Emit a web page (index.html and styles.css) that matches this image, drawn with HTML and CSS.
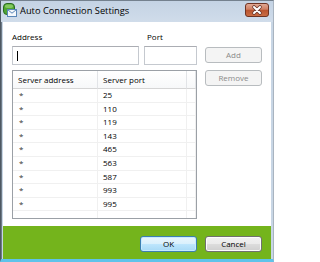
FILE: index.html
```html
<!DOCTYPE html>
<html>
<head>
<meta charset="utf-8">
<link rel="stylesheet" href="styles.css">
</head>
<body>
<div class="window">
  <div class="titlebar">
    <svg class="app-icon" viewBox="0 0 14 14" width="14" height="14">
      <rect x="0.5" y="0.5" width="11" height="11" rx="3.5" fill="#4fa532" stroke="#2b6a22"/>
      <rect x="2" y="1.5" width="8" height="3.5" rx="1.75" fill="#9ad872" opacity="0.7"/>
      <rect x="4.5" y="6.5" width="9" height="7" fill="#f4f8fc" stroke="#5a86b7"/>
      <path d="M4.5 6.5 L9 10.2 L13.5 6.5" fill="none" stroke="#5a86b7"/>
    </svg>
    <span class="title">Auto Connection Settings</span>
    <div class="close">
      <svg viewBox="0 0 24 14" width="24" height="14">
        <defs>
          <linearGradient id="cg" x1="0" y1="0" x2="0" y2="1">
            <stop offset="0" stop-color="#e2ac98"/>
            <stop offset="0.45" stop-color="#cf7f63"/>
            <stop offset="0.5" stop-color="#b9532f"/>
            <stop offset="1" stop-color="#cc6f45"/>
          </linearGradient>
        </defs>
        <rect x="0.5" y="0.5" width="23" height="13" rx="2.5" fill="url(#cg)" stroke="#6e3424"/>
        <path d="M9 4 L15 10 M15 4 L9 10" stroke="#6b3a30" stroke-width="3.6" stroke-linecap="round"/>
        <path d="M9 4 L15 10 M15 4 L9 10" stroke="#ffffff" stroke-width="2" stroke-linecap="round"/>
      </svg>
    </div>
  </div>
  <div class="client">
    <div class="content">
      <div class="lbl">Address</div>
      <div class="lbl port-lbl">Port</div>
      <div></div>
      <div class="input"><span class="caret"></span></div>
      <div class="input"></div>
      <button class="btn add" disabled>Add</button>
      <div class="list">
        <div class="hd">Server address</div><div class="hd">Server port</div><div class="hd"></div>
        <div class="c ast">*</div><div class="c">25</div><div class="c"></div>
        <div class="c ast">*</div><div class="c">110</div><div class="c"></div>
        <div class="c ast">*</div><div class="c">119</div><div class="c"></div>
        <div class="c ast">*</div><div class="c">143</div><div class="c"></div>
        <div class="c ast">*</div><div class="c">465</div><div class="c"></div>
        <div class="c ast">*</div><div class="c">563</div><div class="c"></div>
        <div class="c ast">*</div><div class="c">587</div><div class="c"></div>
        <div class="c ast">*</div><div class="c">993</div><div class="c"></div>
        <div class="c ast">*</div><div class="c">995</div><div class="c"></div>
        <div class="f"></div><div class="f"></div><div class="f"></div>
      </div>
      <button class="btn remove" disabled>Remove</button>
    </div>
    <div class="footer">
      <button class="btn default">OK</button>
      <button class="btn normal">Cancel</button>
    </div>
  </div>
</div>
</body>
</html>
```
FILE: styles.css
```css
html, body {
  margin: 0;
  padding: 0;
}
body {
  width: 274px;
  height: 262px;
  overflow: hidden;
  font-family: "Open Sans", "Noto Sans", sans-serif;
  font-size: 8px;
  color: #000;
  background: #fff;
}
.window {
  width: 274px;
  height: 262px;
  box-sizing: border-box;
  display: flex;
  flex-direction: column;
  background: linear-gradient(90deg, #6f7b87 0, #6f7b87 1px, #c8d6e5 1px);
  border-left: 1px solid #4e5862;
  border-right: 1px solid #a9b4c0;
  border-top: 1px solid #74818e;
  border-bottom: 3px solid #5ec3ea;
}
.titlebar {
  height: 21px;
  flex: none;
  display: flex;
  align-items: flex-start;
  padding: 2px 4px 0 2px;
  box-sizing: border-box;
  background: linear-gradient(#c4d3e4, #d0dcea);
}
.app-icon {
  flex: none;
  display: block;
}
.title {
  margin-left: 3px;
  font-size: 9.3px;
  line-height: 15px;
  color: #000;
  flex: 1;
  white-space: nowrap;
}
.close {
  flex: none;
  width: 24px;
  height: 14px;
}
.close svg {
  display: block;
}
.client {
  flex: 1;
  margin: 0 2px;
  display: flex;
  flex-direction: column;
  background: #fff;
}
.content {
  height: 204px;
  flex: none;
  box-sizing: border-box;
  padding: 8px 9px 0;
  display: grid;
  grid-template-columns: 127px 53px 60px;
  column-gap: 5px;
  grid-template-rows: 16px 24px 149px;
}
.lbl {
  line-height: 13px;
  align-self: start;
}
.port-lbl {
  padding-left: 3px;
}
.input {
  height: 19px;
  box-sizing: border-box;
  border: 1px solid #c5c9cf;
  border-top-color: #abadb3;
  background: #fff;
  align-self: start;
}
.caret {
  display: block;
  width: 1px;
  height: 10px;
  background: #000;
  margin: 4px 0 0 4px;
}
.btn {
  width: 57px;
  height: 16px;
  box-sizing: border-box;
  border-radius: 3px;
  padding: 0;
  font-family: inherit;
  font-size: 8px;
  line-height: 14px;
  text-align: center;
}
.btn:disabled {
  border: 1px solid #b8bcbf;
  background: #f4f4f4;
  color: #8a8a8a;
}
.add {
  justify-self: end;
  align-self: start;
  margin-top: 1px;
}
.remove {
  justify-self: end;
  align-self: start;
}
.list {
  grid-column: 1 / 3;
  border: 1px solid #9ba0a6;
  display: grid;
  grid-template-columns: 85px 89px 1fr;
  grid-template-rows: 18px repeat(9, 13.6px) 1fr;
  background: #fff;
}
.hd {
  box-sizing: border-box;
  border-right: 1px solid #e2e4e7;
  border-bottom: 1px solid #d5d5d5;
  padding-left: 5px;
  display: flex;
  align-items: center;
  background: linear-gradient(#ffffff, #f7f8f9);
}
.c {
  box-sizing: border-box;
  border-right: 1px solid #f0f0f0;
  border-bottom: 1px solid #f0f0f0;
  padding-left: 5px;
  line-height: 12.6px;
  white-space: nowrap;
}
.ast {
  font-size: 8px;
  padding-left: 6px;
  color: #333;
}
.f {
  border-right: 1px solid #f0f0f0;
}
.footer {
  flex: 1;
  background: #74b41c;
  display: flex;
  justify-content: flex-end;
  align-items: flex-start;
  gap: 8px;
  padding: 10px 9px 0;
}
.default {
  border: 1px solid #3c7fb1;
  background: linear-gradient(#eaf6fd 0%, #d9f0fc 50%, #bee6fd 50%, #a7d9f5 100%);
  box-shadow: inset 0 0 0 1px #c6ebff;
  color: #000;
}
.normal {
  border: 1px solid #707070;
  background: linear-gradient(#f2f2f2 0%, #ebebeb 50%, #dddddd 50%, #cfcfcf 100%);
  box-shadow: inset 0 0 0 1px #fcfcfc;
  color: #000;
}
```
